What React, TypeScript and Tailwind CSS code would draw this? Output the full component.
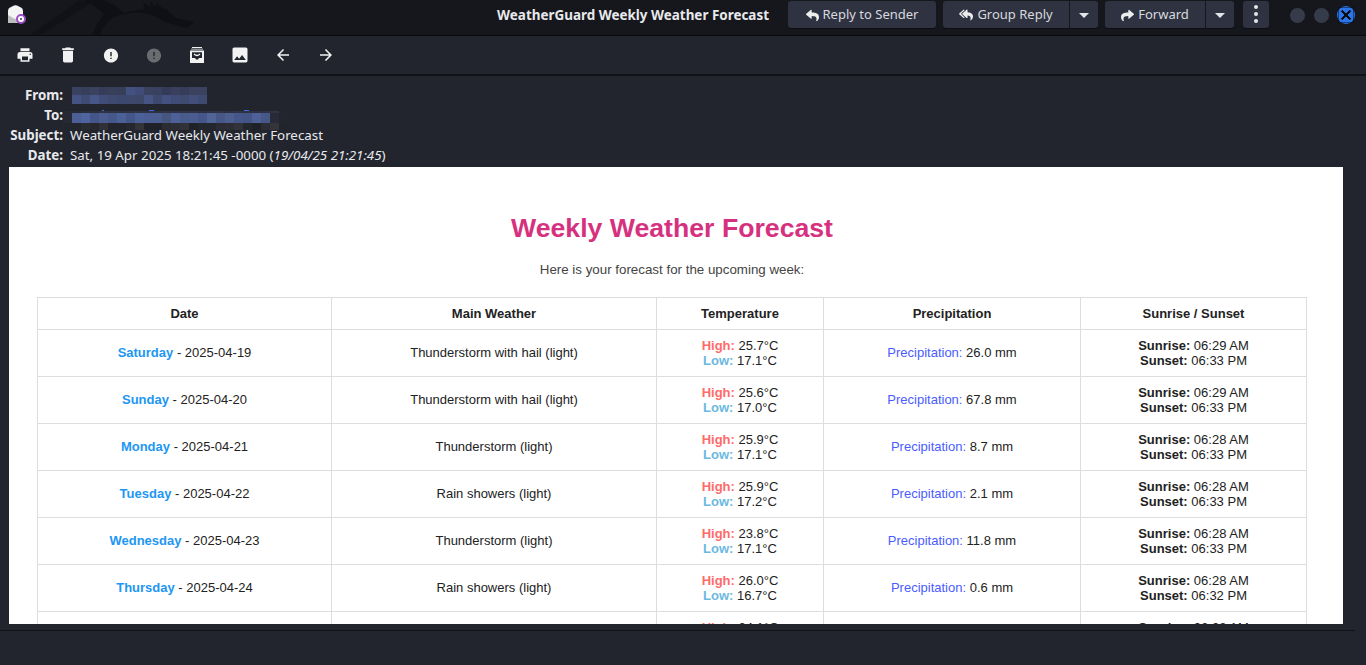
import type { ReactNode } from "react";
import { FaReply, FaReplyAll, FaShare } from "react-icons/fa";
import { MdPrint, MdDelete, MdError, MdImage, MdArrowBack, MdArrowForward, MdClose } from "react-icons/md";

const forecast = [
  { day: "Saturday", date: "2025-04-19", weather: "Thunderstorm with hail (light)", high: "25.7", low: "17.1", rain: "26.0", rise: "06:29", set: "06:33" },
  { day: "Sunday", date: "2025-04-20", weather: "Thunderstorm with hail (light)", high: "25.6", low: "17.0", rain: "67.8", rise: "06:29", set: "06:33" },
  { day: "Monday", date: "2025-04-21", weather: "Thunderstorm (light)", high: "25.9", low: "17.1", rain: "8.7", rise: "06:28", set: "06:33" },
  { day: "Tuesday", date: "2025-04-22", weather: "Rain showers (light)", high: "25.9", low: "17.2", rain: "2.1", rise: "06:28", set: "06:33" },
  { day: "Wednesday", date: "2025-04-23", weather: "Thunderstorm (light)", high: "23.8", low: "17.1", rain: "11.8", rise: "06:28", set: "06:33" },
  { day: "Thursday", date: "2025-04-24", weather: "Rain showers (light)", high: "26.0", low: "16.7", rain: "0.6", rise: "06:28", set: "06:32" },
  { day: "Friday", date: "2025-04-25", weather: "Rain showers (light)", high: "24.1", low: "16.9", rain: "1.4", rise: "06:28", set: "06:32" },
];

// pixelated address blocks, one colour per 9px cell
const fromBlur = [
  ["#394260", "#373f5c", "#3a4260", "#363d58", "#383f5b", "#373e5a", "#435180", "#414d78", "#3a4260", "#394161", "#343b59", "#393f5c", "#363d5a", "#3a4260", "#3a4260"],
  ["#445382", "#404b74", "#465686", "#414d78", "#3f4a70", "#3e486e", "#3e486c", "#3d476a", "#455482", "#3e486c", "#435080", "#414c76", "#3f4a70", "#434f7a", "#3f4a70"],
];

const toBlur = [
  ["#262934", "#272a36", "#2a2e3b", "#2a2e3c", "#2e3244", "#2e3244", "#2b2f3e", "#2e3244", "#2e3244", "#2e3244", "#2c303f", "#2e3244", "#2e3244", "#2e3244", "#2e3244", "#2c303f", "#2e3244", "#2e3244", "#2b2f3e", "#2e3244", "#2e3244", "#2b2f3e", "#2e3244", "#2f3346", "#24262f"],
  ["#262934", "#4b5f96", "#4f649e", "#44558a", "#4a5c90", "#46578a", "#4c6098", "#44558a", "#4c6098", "#4b5e94", "#4b5e92", "#46567f", "#4d6198", "#495a8c", "#4b5d90", "#465688", "#506498", "#475888", "#4d5f8e", "#45568a", "#445486", "#4d6098", "#475888", "#282b36", "#24262f"],
  ["#23252d", "#23252c", "#2a2b31", "#27282e", "#30303a", "#22242c", "#22242c", "#25262e", "#33333a", "#1f2129", "#1f2129", "#2a2b33", "#2d2e35", "#313138", "#1f2129", "#24262e", "#24262e", "#2a2b33", "#2d2e35", "#32323a", "#24262e", "#1f2129", "#2c2d34", "#353539", "#22242c"],
];

function BlurRow({ colors, className }: { colors: string[]; className: string }) {
  return (
    <div className={`flex ${className}`}>
      {colors.map((c, i) => (
        <div key={i} className="w-[9px] shrink-0" style={{ backgroundColor: c }} />
      ))}
    </div>
  );
}

function HeaderRow({ label, children }: { label: string; children: ReactNode }) {
  return (
    <div className="flex h-5 items-center">
      <div className="w-[63px] text-right font-bold text-[#e8e9ec]">{label}</div>
      <div className="ml-[7px] flex items-center text-[#e8e9ec]">{children}</div>
    </div>
  );
}

function TopButton({ className, children }: { className: string; children: ReactNode }) {
  return (
    <div className={`flex h-[27px] items-center justify-center gap-1 bg-[#2f3341] pt-0.5 text-[13px] text-[#d7d9de] shadow-[0_1px_0_#0c0d11] ${className}`}>
      {children}
    </div>
  );
}

function Caret() {
  return <div className="h-0 w-0 border-x-[5px] border-t-[5px] border-x-transparent border-t-[#e4e5e8]" />;
}

function ArchiveIcon() {
  return (
    <svg width="14" height="16" viewBox="0 0 14 16" aria-hidden="true">
      <path d="M2 0h10v1H2zM1 1.8h12v.8H1z" fill="#f2f2f2" />
      <path fillRule="evenodd" d="M0 3.4h14V16H0zM2 5.2V11h3l1 1.4h2L9 11h3V5.2z" fill="#f2f2f2" />
      <path d="M4 7q3 3 6 0" stroke="#f2f2f2" strokeWidth="1.2" fill="none" />
    </svg>
  );
}

function AppIcon() {
  return (
    <div className="relative h-[19px] w-[18px]">
      <svg width="15" height="18" viewBox="0 0 15 18" className="absolute left-0 top-0" aria-hidden="true">
        <path d="M0 6Q0 3 3 2L6 .5Q7.5 0 9 .5L12 2Q15 3 15 6V18H0z" fill="#f4f4f4" />
        <path d="M0 18V10l7 4 8-4v8z" fill="#bdbdbd" />
      </svg>
      <div className="absolute bottom-0 right-0 flex h-[10px] w-[10px] items-center justify-center rounded-full border-2 border-[#9a4dc4] bg-white">
        <div className="h-0.5 w-0.5 rounded-full bg-[#333]" />
      </div>
    </div>
  );
}

function Dragon() {
  return (
    <svg width="210" height="35" viewBox="0 0 210 35" className="absolute left-0 top-0" aria-hidden="true">
      <path d="M80 0 30 35h11L91 3z" fill="#111217" />
      <path d="M83 0c8 4 16 9 21 14-5 6-9 13-12 21h8c3-8 8-14 14-18 10-4 20-5 28-4 8 1 14 3 19 7 4 3 9 3 14 5l13 3 6-6-18-4-10-9-4-1-6-6 1 5-7-5 1 6-8-6 2 7c-8 1-14 2-21 4-4-3-9-9-21-13z" fill="#0f1015" />
    </svg>
  );
}

export default function App() {
  return (
    <div className="h-[665px] w-[1366px] overflow-hidden bg-[#22252e] font-['Noto_Sans',sans-serif] text-[13.33px]">
      <div className="relative flex h-9 items-center border-b border-[#0a0a0d] bg-[#16171d]">
        <Dragon />
        <div className="relative ml-2 mt-[-6px]">
          <AppIcon />
        </div>
        <div className="relative ml-auto mb-[5px] mr-[19px] text-[13.45px] font-bold text-[#e8e9ec]">WeatherGuard Weekly Weather Forecast</div>
        <div className="relative mb-[7px] flex items-center">
          <TopButton className="w-[148px] rounded-[3px]">
            <FaReply className="text-[13px] text-[#eceded]" />
            Reply to Sender
          </TopButton>
          <TopButton className="ml-[7px] w-[126px] rounded-l-[3px]">
            <FaReplyAll className="text-[14px] text-[#eceded]" />
            Group Reply
          </TopButton>
          <TopButton className="ml-px w-7 rounded-r-[3px]">
            <Caret />
          </TopButton>
          <TopButton className="ml-[7px] w-[100px] rounded-l-[3px]">
            <FaShare className="text-[13px] text-[#eceded]" />
            Forward
          </TopButton>
          <TopButton className="ml-px w-7 rounded-r-[3px]">
            <Caret />
          </TopButton>
          <TopButton className="ml-[9px] w-[26px] flex-col !gap-[3px] rounded-[3px] !pt-0">
            <div className="h-1 w-1 rounded-full bg-[#e4e5e8]" />
            <div className="h-1 w-1 rounded-full bg-[#e4e5e8]" />
            <div className="h-1 w-1 rounded-full bg-[#e4e5e8]" />
          </TopButton>
        </div>
        <div className="relative mb-[5px] ml-5 mr-[11px] flex items-center gap-[7px]">
          <div className="h-[17px] w-[17px] rounded-full border border-[#14151a] bg-[#363b4a]" />
          <div className="h-[17px] w-[17px] rounded-full border border-[#14151a] bg-[#363b4a]" />
          <div className="flex h-[18px] w-[18px] items-center justify-center rounded-full bg-[#2a74ec]">
            <MdClose className="text-[16px] text-[#0b0c10] [&_path]:stroke-[#0b0c10] [&_path]:stroke-[1.5]" />
          </div>
        </div>
      </div>

      <div className="flex h-10 items-center gap-[21px] border-b-2 border-[#121318] pl-[14px] text-[#f2f2f2]">
        <MdPrint className="w-[22px] text-[18px]" />
        <MdDelete className="w-[22px] text-[20px]" />
        <MdError className="w-[22px] text-[17px]" />
        <MdError className="w-[22px] text-[17px] text-[#6b6c70]" />
        <div className="flex w-[22px] justify-center">
          <ArchiveIcon />
        </div>
        <MdImage className="w-[22px] text-[20px]" />
        <MdArrowBack className="w-[22px] text-[18px]" />
        <MdArrowForward className="w-[22px] text-[18px]" />
      </div>

      <div className="pt-2.5">
        <HeaderRow label="From:">
          <div className="ml-0.5 mt-[-1px]">
            <BlurRow colors={fromBlur[0]} className="h-2" />
            <BlurRow colors={fromBlur[1]} className="h-[9px]" />
          </div>
        </HeaderRow>
        <HeaderRow label="To:">
          <div className="relative ml-[-7px] mt-[9px]">
            <div className="absolute -top-px left-[39px] h-px w-0.5 bg-[#3f6be0]" />
            <div className="absolute -top-px left-[86px] h-px w-[5px] bg-[#3f6be0]" />
            <div className="absolute -top-px left-[181px] h-px w-[5px] bg-[#3f6be0]" />
            <BlurRow colors={toBlur[0]} className="h-0.5" />
            <BlurRow colors={toBlur[1]} className="h-2.5" />
            <BlurRow colors={toBlur[2]} className="h-[7px]" />
          </div>
        </HeaderRow>
        <HeaderRow label="Subject:">WeatherGuard Weekly Weather Forecast</HeaderRow>
        <HeaderRow label="Date:">
          <span>
            Sat, 19 Apr 2025 18:21:45 -0000 (<i>19/04/25 21:21:45</i>)
          </span>
        </HeaderRow>
      </div>

      <div className="ml-[9px] mt-px h-[457px] w-[1334px] overflow-hidden bg-white pl-7 pr-9 font-['Liberation_Sans',sans-serif] text-[13px] text-[#222]">
        <h1 className="mt-[45px] text-center text-[26.67px] font-bold leading-[32px] text-[#d6317f]">Weekly Weather Forecast</h1>
        <p className="mt-[18px] text-center text-[13.33px] leading-[15px] text-[#444]">Here is your forecast for the upcoming week:</p>
        <table className="mt-5 w-[1269px] table-fixed border-collapse border border-[#ddd] text-center">
          <colgroup>
            <col className="w-[294px]" />
            <col className="w-[325px]" />
            <col className="w-[167px]" />
            <col className="w-[257px]" />
            <col className="w-[226px]" />
          </colgroup>
          <thead>
            <tr className="h-8 font-bold">
              {["Date", "Main Weather", "Temperature", "Precipitation", "Sunrise / Sunset"].map((h) => (
                <th key={h} className="border border-[#ddd] leading-[15px]">
                  {h}
                </th>
              ))}
            </tr>
          </thead>
          <tbody className="leading-[15px]">
            {forecast.map((f) => (
              <tr key={f.day} className="h-[47px]">
                <td className="border border-[#ddd] pb-0.5">
                  <b className="text-[#2196f3]">{f.day}</b> - {f.date}
                </td>
                <td className="border border-[#ddd] pb-0.5">{f.weather}</td>
                <td className="border border-[#ddd]">
                  <b className="text-[#ff6b6b]">High:</b> {f.high}°C
                  <br />
                  <b className="text-[#6bb9e0]">Low:</b> {f.low}°C
                </td>
                <td className="border border-[#ddd] pb-0.5">
                  <span className="text-[#4a5cff]">Precipitation:</span> {f.rain} mm
                </td>
                <td className="border border-[#ddd]">
                  <b>Sunrise:</b> {f.rise} AM
                  <br />
                  <b>Sunset:</b> {f.set} PM
                </td>
              </tr>
            ))}
          </tbody>
        </table>
      </div>

      <div className="mt-1.5 w-[1355px] border-t border-[#121318]" />
    </div>
  );
}
